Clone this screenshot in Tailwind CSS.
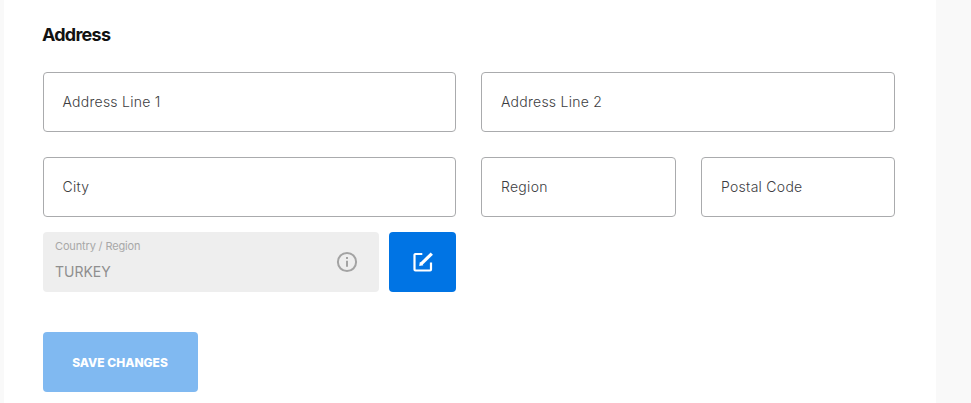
<!DOCTYPE html>
<html lang="en">
<head>
    <meta charset="UTF-8">
    <meta name="viewport" content="width=device-width, initial-scale=1.0">
    <title>Address</title>
    <script src="https://cdn.jsdelivr.net/npm/@tailwindcss/browser@4"></script>
</head>
<body class="bg-[#f9f9f9] font-['Inter',sans-serif] overflow-hidden">
    <main class="ml-1 w-[932px] h-[403px] bg-white pl-[39px] pr-[41px] pt-[23px]">
        <h2 class="h-6 -ml-px text-[18px] leading-6 font-bold tracking-[-0.75px] text-[#121212]">Address</h2>

        <form class="mt-[25px]">
            <div class="flex gap-[25px] text-sm font-light tracking-[0.25px] text-[#3c3d41]">
                <label class="flex items-center w-[413px] h-[60px] pl-[18.5px] border border-[#aaabad] rounded-[4px]">Address Line 1</label>
                <label class="flex items-center w-[414px] h-[60px] pl-[19px] border border-[#aaabad] rounded-[4px]">Address Line 2</label>
            </div>

            <div class="flex gap-[25px] mt-[25px] text-sm font-light tracking-[0.28px] text-[#3c3d41]">
                <label class="flex items-center w-[413px] h-[60px] pl-[18.5px] border border-[#aaabad] rounded-[4px]">City</label>
                <label class="flex items-center w-[195px] h-[60px] pl-[19px] border border-[#aaabad] rounded-[4px]">Region</label>
                <label class="flex items-center w-[194px] h-[60px] pl-[19px] border border-[#aaabad] rounded-[4px]">Postal Code</label>
            </div>

            <div class="flex gap-[10px] mt-[15px]">
                <div class="flex items-center justify-between w-[336px] h-[60px] pl-3 pr-[21px] bg-[#eeeeee] rounded-[4px]">
                    <div class="h-[60px] pt-[6px]">
                        <div class="text-[11px] leading-4 tracking-[-0.15px] text-[#a8a8a8]">Country / Region</div>
                        <div class="mt-2 text-sm leading-5 text-[#8f8f8f]">TURKEY</div>
                    </div>
                    <svg class="w-[22px] h-[22px]" viewBox="0 0 22 22" fill="none" stroke="#a3a3a3" stroke-width="2">
                        <circle cx="11" cy="11" r="9.1"/>
                        <path d="M11 9.8v6M11 6v2"/>
                    </svg>
                </div>
                <button type="button" aria-label="Edit" class="flex items-center justify-center w-[67px] h-[60px] bg-[#0074e4] rounded-[4px]">
                    <svg class="w-5 h-5" viewBox="0 0 20 20" fill="none" stroke="#fff" stroke-width="2.2">
                        <path d="M9.3 2H2.4a.9.9 0 0 0-.9.9v14.7c0 .5.4.9.9.9h14.7c.5 0 .9-.4.9-.9V10.5"/>
                        <path d="M8 12.2 18.8 1.6" stroke-width="3.2"/>
                        <path d="M6.9 9.7 6.2 13.9l4.2-.7z" fill="#fff" stroke="none"/>
                    </svg>
                </button>
            </div>

            <button type="button" class="block mt-10 w-[155px] h-[60px] pt-0.5 pr-px bg-[#80b9f1] rounded-[4px] text-xs font-extrabold text-white">SAVE CHANGES</button>
        </form>
    </main>
</body>
</html>
